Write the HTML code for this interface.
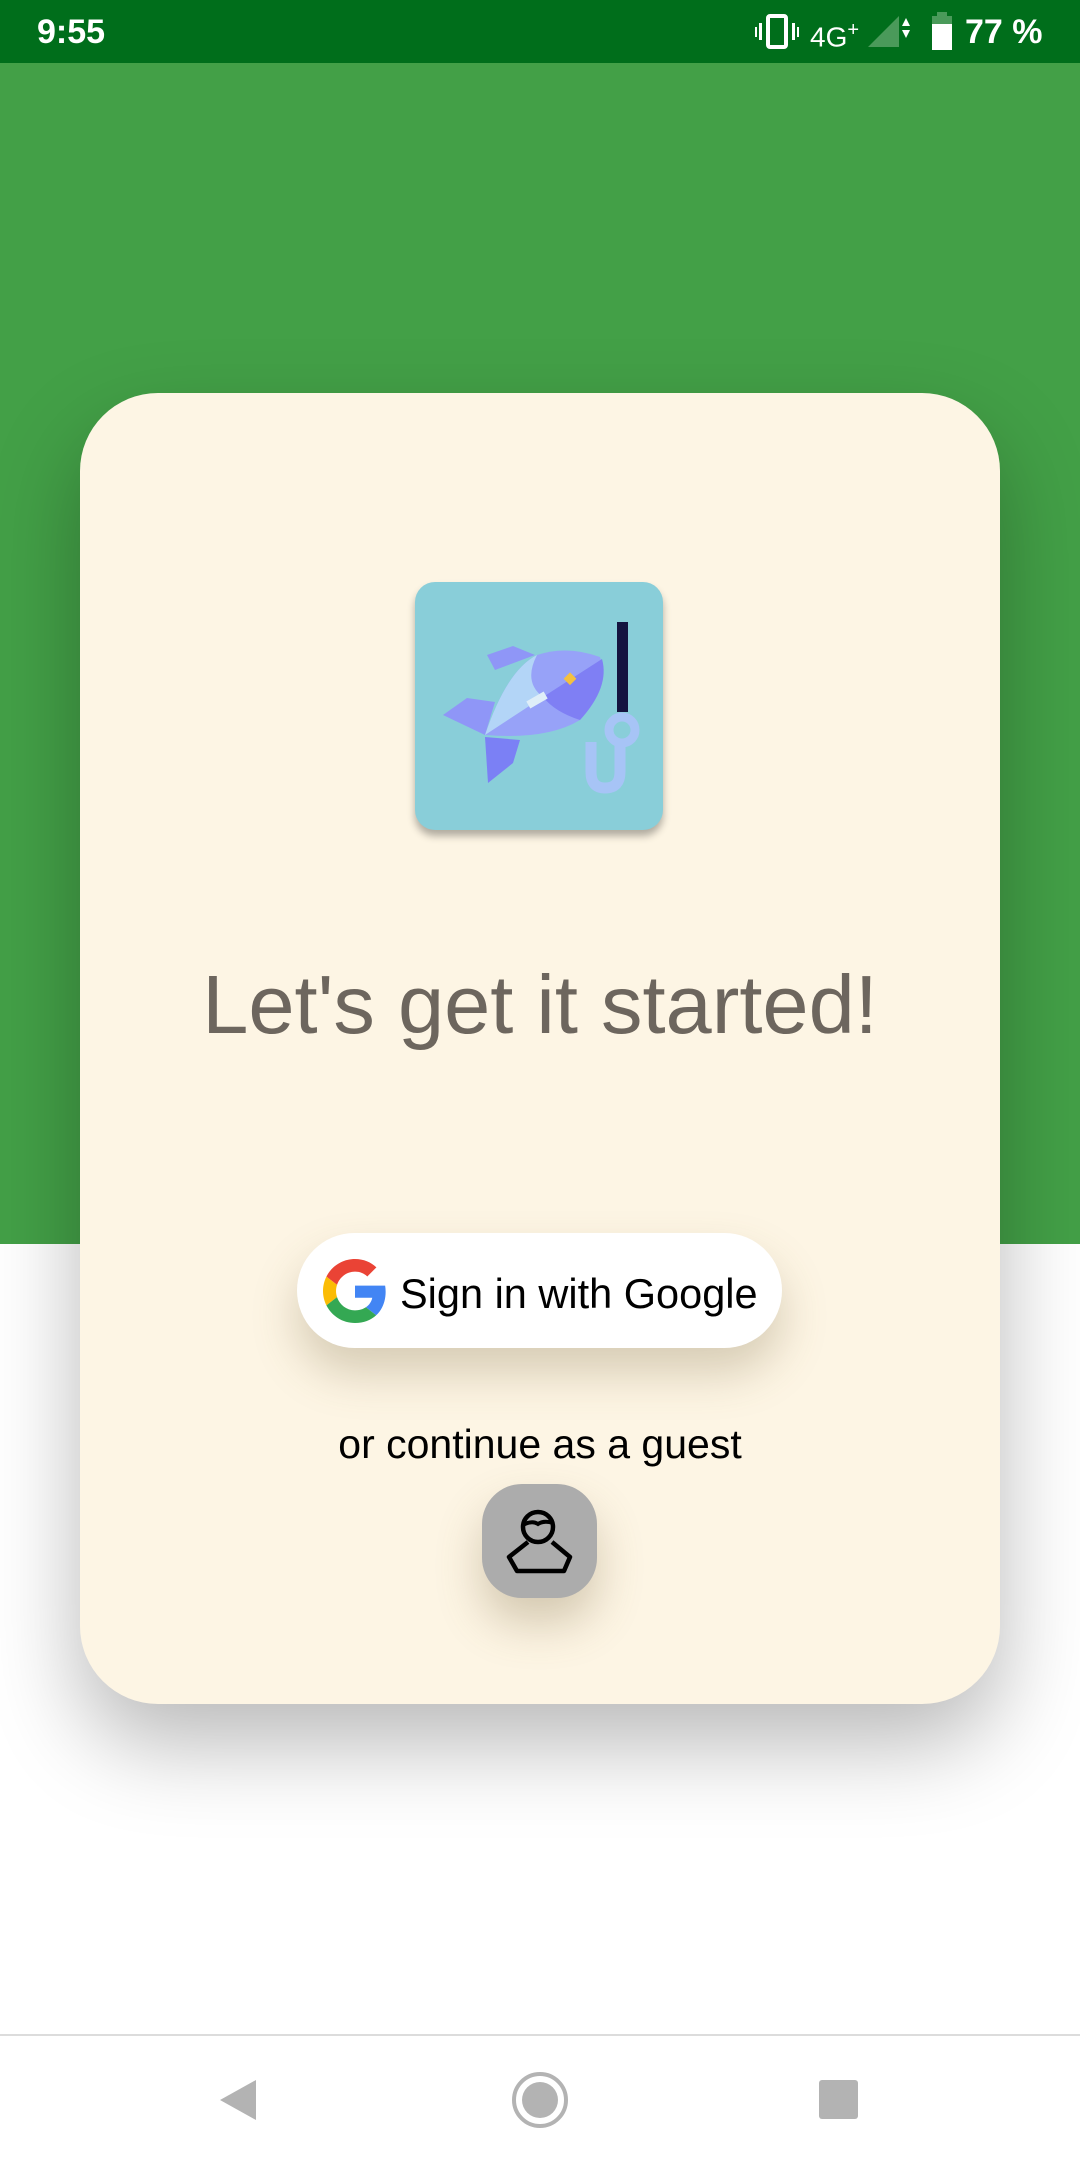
<!DOCTYPE html>
<html><head><meta charset="utf-8"><style>
html,body{margin:0;padding:0}
body{width:1080px;height:2160px;position:relative;overflow:hidden;background:#fff;font-family:"Liberation Sans",Roboto,sans-serif}
.status{position:absolute;left:0;top:0;width:1080px;height:63px;background:#006e1b;color:#fff}
.green{position:absolute;left:0;top:63px;width:1080px;height:1181px;background:#43a047}
.card{position:absolute;left:80px;top:393px;width:920px;height:1311px;background:#fdf5e4;border-radius:78px;box-shadow:0 40px 90px rgba(0,0,0,0.28)}
.logo{position:absolute;left:415px;top:582px;width:248px;height:248px;border-radius:20px;background:#89ced9;box-shadow:0 6px 8px rgba(0,0,0,0.3)}
.title{position:absolute;left:0;width:1080px;top:955px;text-align:center;font-size:83px;color:#6d665e;line-height:100px}
.gbtn{position:absolute;left:297px;top:1233px;width:485px;height:115px;border-radius:58px;background:#fff;box-shadow:0 25px 45px rgba(120,100,60,0.28)}
.gtext{position:absolute;left:400px;top:1270px;font-size:41.5px;color:#000;line-height:48px;white-space:nowrap}
.guest{position:absolute;left:0;width:1080px;top:1420px;text-align:center;font-size:41px;color:#000;line-height:48px}
.gb{position:absolute;left:482px;top:1484px;width:115px;height:114px;border-radius:40px;background:#acacac;box-shadow:0 25px 45px rgba(120,100,60,0.3)}
.nav{position:absolute;left:0;top:2034px;width:1080px;height:126px;background:#fff;border-top:2px solid #dcdcdc}
</style></head><body>
<div class="status">
 <div style="position:absolute;left:37px;top:10px;font-size:34px;font-weight:bold;line-height:44px">9:55</div>
 <svg style="position:absolute;left:755px;top:14px" width="48" height="36" viewBox="0 0 48 36"><rect x="13" y="2" width="18" height="31" rx="2" fill="none" stroke="#fff" stroke-width="4"/><rect x="4" y="9" width="3" height="17" fill="#fff"/><rect x="37" y="9" width="3" height="17" fill="#fff"/><rect x="0" y="13" width="2" height="10" fill="#fff"/><rect x="42" y="13" width="2" height="10" fill="#fff"/></svg>
 <div style="position:absolute;left:810px;top:12px;font-size:28px;line-height:36px">4G<sup style="font-size:20px">+</sup></div>
 <svg style="position:absolute;left:866px;top:14px" width="50" height="34" viewBox="0 0 50 34"><polygon points="2,33 33,2 33,33" fill="#4a9a5a"/><polygon points="36,12 40,4 44,12" fill="#fff"/><polygon points="36,16 40,24 44,16" fill="#fff"/></svg>
 <svg style="position:absolute;left:932px;top:12px" width="20" height="38" viewBox="0 0 20 38"><rect x="5" y="0" width="10" height="4" fill="#4a9a5a"/><rect x="0" y="4" width="20" height="8" fill="#4a9a5a"/><rect x="0" y="12" width="20" height="26" fill="#fff"/></svg>
 <div style="position:absolute;left:965px;top:10px;font-size:34px;font-weight:bold;line-height:44px">77 %</div>
</div>
<div class="green"></div>
<div class="card"></div>
<div class="logo">
 <svg width="248" height="248" viewBox="0 0 248 248">
  <polygon points="28,133 52,116 80,120 70,153" fill="#8f96f7"/>
  <polygon points="72,73 98,64 120,73 80,88" fill="#8f96f7"/>
  <polygon points="70,155 105,158 98,181 73,201" fill="#7b80f5"/>
  <path d="M70,153 Q92,88 122,73 Q152,63 185,75 Q195,105 165,138 Q132,158 70,153Z" fill="#97a2f8"/>
  <path d="M70,153 Q92,88 122,73 Q108,100 128,115 Z" fill="#b3d5f7"/>
  <path d="M128,115 L187,77 Q195,105 165,138 Q140,130 128,115Z" fill="#7f7ff4"/>
  <rect x="112" y="114" width="20" height="8" fill="#dfeef8" transform="rotate(-30 122 118)"/>
  <rect x="151" y="92" width="9" height="9" fill="#f4c040" transform="rotate(45 155 96)"/>
  <rect x="202" y="40" width="11" height="90" fill="#141440"/>
  <circle cx="207" cy="148" r="13" fill="none" stroke="#a7c4f6" stroke-width="9"/>
  <path d="M205,160 L205,190 Q205,206 190,206 Q176,206 176,190 L176,160" fill="none" stroke="#a7c4f6" stroke-width="11"/>
 </svg>
</div>
<div class="title">Let's get it started!</div>
<div class="gbtn"></div>
<svg style="position:absolute;left:323px;top:1259px" width="64" height="64" viewBox="0 0 48 48">
 <path fill="#EA4335" d="M24 9.5c3.54 0 6.71 1.220 9.21 3.6l6.85-6.85C35.9 2.38 30.47 0 24 0 14.62 0 6.51 5.38 2.56 13.22l7.98 6.19C12.43 13.72 17.740 9.5 24 9.5z"/>
 <path fill="#4285F4" d="M46.98 24.55c0-1.57-.15-3.09-.38-4.55H24v9.02h12.94c-.58 2.96-2.26 5.48-4.78 7.18l7.73 6c4.51-4.18 7.09-10.36 7.09-17.65z"/>
 <path fill="#FBBC05" d="M10.53 28.59c-.48-1.45-.76-2.99-.76-4.59s.27-3.14.76-4.59l-7.98-6.19C.92 16.46 0 20.12 0 24c0 3.88.92 7.54 2.56 10.78l7.97-6.19z"/>
 <path fill="#34A853" d="M24 48c6.48 0 11.93-2.13 15.89-5.81l-7.73-6c-2.15 1.45-4.92 2.3-8.16 2.3-6.26 0-11.570-4.22-13.47-9.91l-7.98 6.19C6.51 42.62 14.62 48 24 48z"/>
</svg>
<div class="gtext">Sign in with Google</div>
<div class="guest">or continue as a guest</div>
<div class="gb">
 <svg width="115" height="114" viewBox="0 0 115 114">
  <circle cx="56" cy="43" r="15" fill="none" stroke="#000" stroke-width="4.5"/>
  <path d="M41,41 Q50,36 56,40 Q62,36 71,39" fill="none" stroke="#000" stroke-width="4"/>
  <path d="M46,58 L27,73 L35,87 L82,87 L88,73 L70,58" fill="none" stroke="#000" stroke-width="4.5" stroke-linejoin="round"/>
 </svg>
</div>
<div class="nav">
 <svg style="position:absolute;left:218px;top:42px" width="40" height="44" viewBox="0 0 40 44"><polygon points="38,2 38,42 2,22" fill="#b3b3b3"/></svg>
 <svg style="position:absolute;left:511px;top:35px" width="58" height="58" viewBox="0 0 58 58"><circle cx="29" cy="29" r="26" fill="none" stroke="#b3b3b3" stroke-width="4"/><circle cx="29" cy="29" r="18" fill="#b3b3b3"/></svg>
 <div style="position:absolute;left:819px;top:44px;width:39px;height:39px;background:#b3b3b3;border-radius:3px"></div>
</div>
</body></html>
